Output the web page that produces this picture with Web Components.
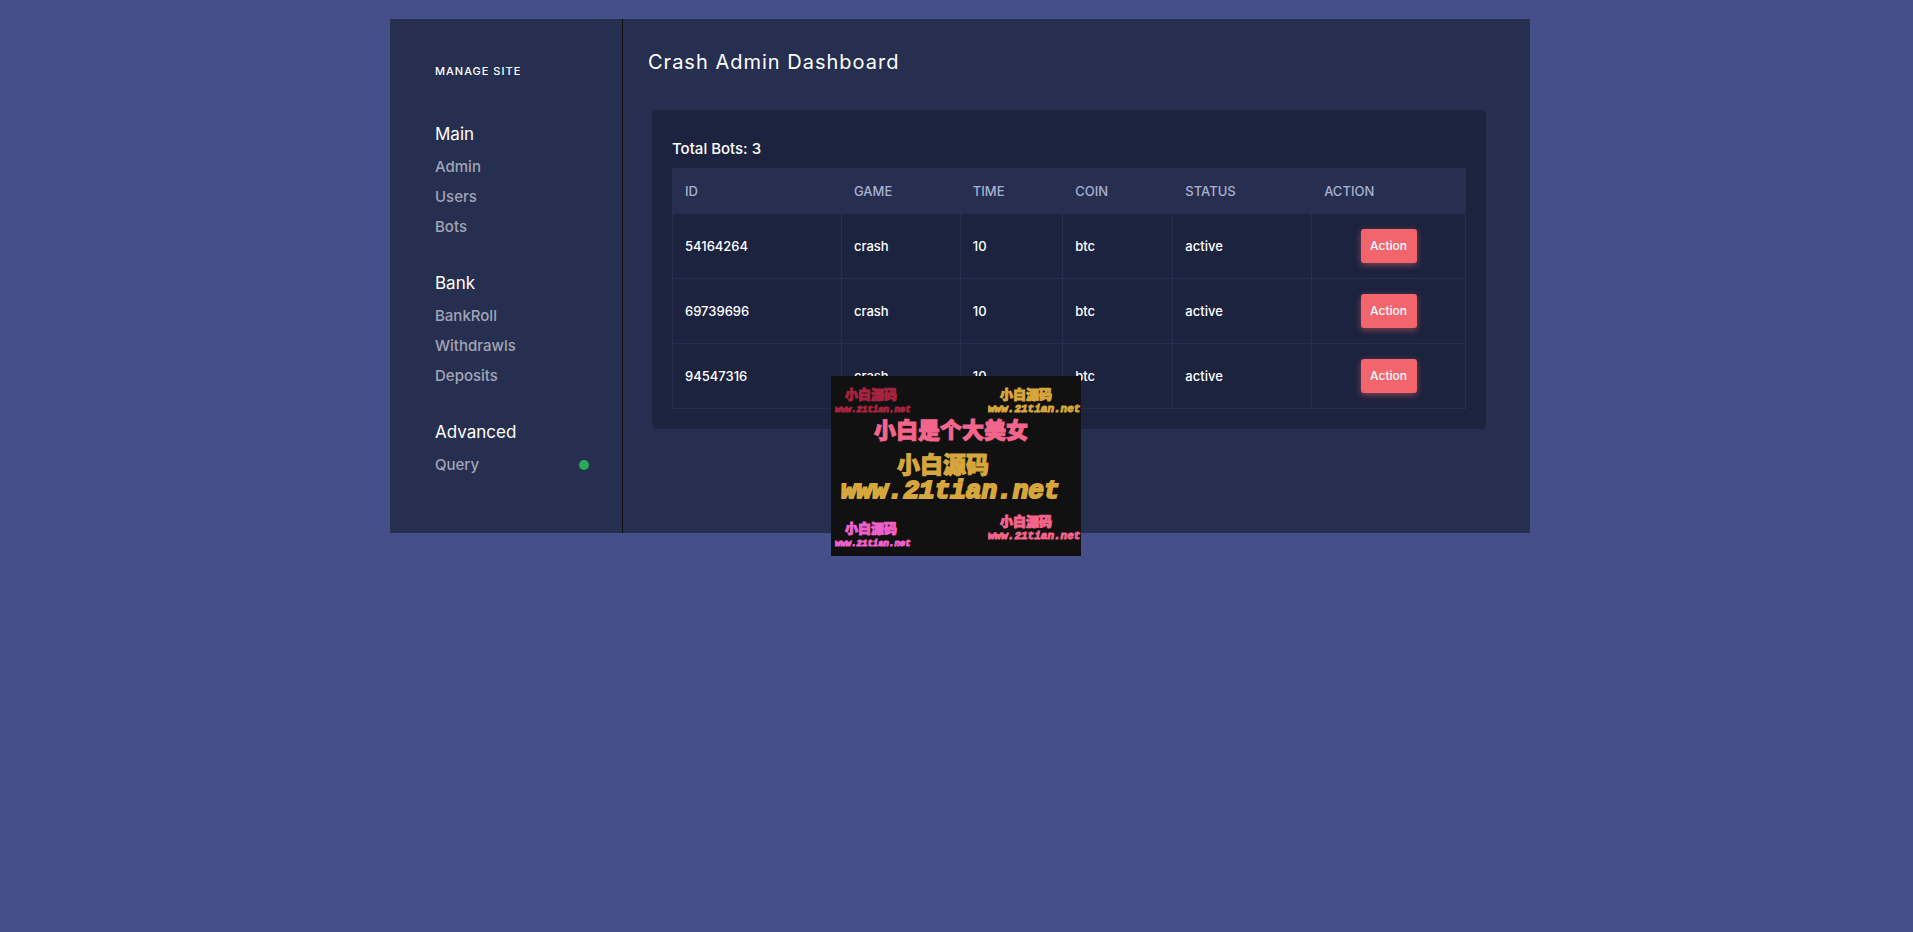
<!DOCTYPE html>
<html lang="en">
<head>
<meta charset="utf-8">
<title>Crash Admin Dashboard</title>
<style>
  html { background: #45508a; }
  body {
    margin: 0;
    padding: 19px 0 0 7px;
    font-family: Inter, "Noto Sans CJK SC", sans-serif;
    font-size: 14px;
    line-height: 20px;
    color: #fff;
  }
</style>
</head>
<body>
<admin-shell>
  <side-nav slot="nav">
    <nav-group heading="Main">
      <nav-item>Admin</nav-item>
      <nav-item>Users</nav-item>
      <nav-item>Bots</nav-item>
    </nav-group>
    <nav-group heading="Bank">
      <nav-item>BankRoll</nav-item>
      <nav-item>Withdrawls</nav-item>
      <nav-item>Deposits</nav-item>
    </nav-group>
    <nav-group heading="Advanced">
      <nav-item online>Query</nav-item>
    </nav-group>
  </side-nav>
  <span slot="title">Crash Admin Dashboard</span>
  <bots-panel></bots-panel>
</admin-shell>
<promo-banner></promo-banner>

<script>
class BaseElement extends HTMLElement {
  connectedCallback() {
    if (!this.shadowRoot) this.attachShadow({ mode: "open" }).innerHTML = this.render();
  }
}

customElements.define("admin-shell", class extends BaseElement {
  render() {
    return `<style>
      :host { display: grid; grid-template-columns: 232px 1fr; max-width: 1140px; margin: 0 auto; background: #262f50; }
      main { border-left: 1px solid #111; padding: 31px 44px 104px 25px; }
      h1 { margin: 0 0 36px; font-size: 20px; line-height: 24px; font-weight: 400; letter-spacing: 1px; }
    </style>
    <slot name="nav"></slot>
    <main><h1><slot name="title"></slot></h1><slot></slot></main>`;
  }
});

customElements.define("side-nav", class extends BaseElement {
  render() {
    return `<style>
      :host { display: block; padding: 42px 33px 53px 45px; }
      h2 { margin: 0 0 41px; font-size: 11px; line-height: 20px; font-weight: 500; letter-spacing: 1px; }
      nav { display: flex; flex-direction: column; gap: 29px; }
    </style>
    <h2>MANAGE SITE</h2>
    <nav><slot></slot></nav>`;
  }
});

customElements.define("nav-group", class extends BaseElement {
  render() {
    return `<style>
      :host { display: block; }
      h3 { margin: 0 0 6px; font-size: 17px; line-height: 24px; font-weight: 400; }
    </style>
    <h3>${this.getAttribute("heading")}</h3>
    <div><slot></slot></div>`;
  }
});

customElements.define("nav-item", class extends BaseElement {
  render() {
    return `<style>
      :host { display: block; }
      a { display: flex; align-items: center; justify-content: space-between; height: 30px; font-size: 15px; font-weight: 500; color: #a2a5b3; text-decoration: none; }
      i { width: 10px; height: 10px; border-radius: 50%; background: #2baa55; }
    </style>
    <a href="#"><slot></slot>${this.hasAttribute("online") ? "<i></i>" : ""}</a>`;
  }
});

customElements.define("action-button", class extends BaseElement {
  render() {
    return `<style>
      :host { display: block; text-align: center; }
      button { width: 56px; height: 34px; padding: 0; border: 0; border-radius: 3px; background: #f2656c; box-shadow: 0 2px 6px rgba(242, 101, 108, .5); color: #fff; font: 500 12px/20px Inter, sans-serif; vertical-align: top; }
    </style>
    <button type="button"><slot></slot></button>`;
  }
});

customElements.define("bots-panel", class extends BaseElement {
  render() {
    const bots = ["54164264", "69739696", "94547316"];
    return `<style>
      :host { display: block; margin-left: 4px; padding: 29px 20px 20px; border-radius: 4px; background: #1c233e; }
      h2 { margin: 0 0 9px; font-size: 15px; line-height: 20px; font-weight: 500; }
      table { width: 100%; table-layout: fixed; border-collapse: collapse; }
      th, td { box-sizing: border-box; padding: 0 12px; border: 1px solid #262f50; text-align: left; font-size: 13px; }
      th { height: 45px; background: #262f50; color: #a9b1d0; font-weight: 500; }
      td { height: 65px; font-weight: 500; }
    </style>
    <h2>Total Bots: ${bots.length}</h2>
    <table>
      <colgroup><col style="width:21.3%"><col style="width:15%"><col style="width:12.9%"><col style="width:13.9%"><col style="width:17.5%"><col></colgroup>
      <thead><tr><th>ID</th><th>GAME</th><th>TIME</th><th>COIN</th><th>STATUS</th><th>ACTION</th></tr></thead>
      <tbody>${bots.map(id => `<tr><td>${id}</td><td>crash</td><td>10</td><td>btc</td><td>active</td><td><action-button>Action</action-button></td></tr>`).join("")}</tbody>
    </table>`;
  }
});

customElements.define("promo-banner", class extends BaseElement {
  render() {
    const stamp = (x, y, name, size, url, color) => `<g fill="${color}" stroke="${color}">
        <text x="${x}" y="${y}" font-size="13">${name}</text>
        <text class="url" x="${url}" y="${y + 13}" font-size="${size}">www.21tian.net</text></g>`;
    return `<style>
      :host { display: block; position: fixed; left: 50%; top: 50%; width: 250px; height: 180px; margin: -90px 0 0 -126px; background: #111; }
      svg { display: block; }
      text { font-family: "Noto Sans CJK SC", sans-serif; font-weight: 900; }
      .url { font-family: "Liberation Mono", monospace; font-weight: 700; font-style: italic; }
    </style>
    <svg width="250" height="180" viewBox="0 0 250 180" stroke-width="1">
      ${stamp(14, 23, "小白源码", 9, 4, "#a8233f")}
      ${stamp(169, 23, "小白源码", 11, 157, "#d7a73d")}
      <g fill="#f3658b" stroke="#f3658b"><text x="43" y="62" font-size="22">小白是个大美女</text></g>
      <g fill="#d7a73d" stroke="#d7a73d">
        <text x="66" y="97" font-size="23">小白源码</text>
        <text class="url" x="10" y="122" font-size="26" stroke-width="2">www.21tian.net</text>
      </g>
      ${stamp(14, 157, "小白源码", 9, 4, "#f060c8")}
      ${stamp(169, 150, "小白源码", 11, 157, "#f3658b")}
    </svg>`;
  }
});
</script>
</body>
</html>
